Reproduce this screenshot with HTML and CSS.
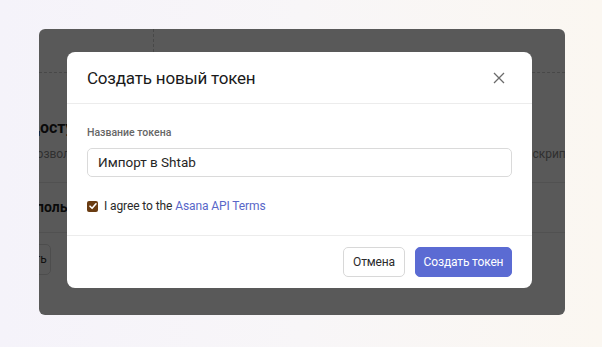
FILE: index.html
```html
<!DOCTYPE html>
<html lang="ru">
<head>
<meta charset="utf-8">
<link rel="stylesheet" href="styles.css">
</head>
<body>
<div class="panel">
  <div class="page">
    <div class="toprow">
      <div class="cell cell-a"></div>
      <div class="cell cell-b"></div>
    </div>
    <div class="section">
      <div class="sec-title">Доступ к API</div>
      <div class="sec-desc"><span>Позволяет сторонним приложениям</span><span>для скриптов</span></div>
    </div>
    <div class="section2">
      <div class="sec-title2">Использование</div>
    </div>
    <div class="btnrow"><span class="ghost-btn">Создать</span></div>
  </div>
  <div class="overlay"></div>
  <div class="modal">
    <div class="modal-head">
      <h2 class="modal-title">Создать новый токен</h2>
      <svg class="close" width="12" height="12" viewBox="0 0 12 12"><path d="M1 1L11 11M11 1L1 11" stroke="#6b6b6b" stroke-width="1.3" fill="none"/></svg>
    </div>
    <div class="modal-body">
      <label class="label">Название токена</label>
      <div class="input">Импорт в Shtab</div>
      <div class="agree">
        <span class="check"><svg width="10" height="10" viewBox="0 0 10 10"><path d="M2 5.2L4.1 7.3L8 2.8" stroke="#fff" stroke-width="1.6" fill="none" stroke-linecap="round" stroke-linejoin="round"/></svg></span>
        <span>I agree to the <a class="link">Asana API Terms</a></span>
      </div>
    </div>
    <div class="modal-foot">
      <button class="btn btn-cancel">Отмена</button>
      <button class="btn btn-primary">Создать токен</button>
    </div>
  </div>
</div>
</body>
</html>
```
FILE: styles.css
```css
* { box-sizing: border-box; }
html, body { margin: 0; height: 100%; }
body {
  background: linear-gradient(90deg, #f5f3fa 0%, #f8f6f8 50%, #fbf7f1 100%);
  font-family: Roboto, "Noto Sans", sans-serif;
  padding: 29px 37px 0 39px;
}
.panel {
  position: relative;
  width: 526px;
  height: 286px;
  border-radius: 6px;
  overflow: hidden;
  background: #fff;
}
.page {
  height: 100%;
  color: #1f1f1f;
}
.toprow {
  display: flex;
  height: 44px;
  border-bottom: 1px dashed #cfcfcf;
}
.cell-a { width: 115px; border-right: 1px dashed #cfcfcf; }
.section { padding: 44px 0 0 0; margin-left: -11px; height: 110px; border-bottom: 1px solid #e8e8e8; margin-right: -20px; }
.sec-title { font-size: 16px; font-weight: 700; line-height: 22px; white-space: nowrap; }
.sec-desc { display: flex; justify-content: space-between; font-size: 12px; color: #8a8a8a; margin-top: 8px; white-space: nowrap; }
.section2 { margin-left: -20px; height: 50px; border-bottom: 1px solid #e8e8e8; padding-top: 16px; margin-right: -20px; }
.sec-title2 { font-size: 14px; font-weight: 700; white-space: nowrap; }
.btnrow { padding-top: 11px; margin-left: -40px; }
.ghost-btn { display: inline-block; height: 31px; width: 52px; border: 1px solid #dcdcdc; border-radius: 5px; font-size: 12px; line-height: 29px; text-align: right; padding-right: 6px; color: #333; white-space: nowrap; overflow: hidden; }
.overlay {
  position: absolute;
  inset: 0;
  background: rgba(0, 0, 0, 0.65);
}
.modal {
  position: absolute;
  left: 28px;
  top: 23px;
  width: 465px;
  height: 236px;
  background: #fff;
  border-radius: 8px;
  display: flex;
  flex-direction: column;
}
.modal-head {
  height: 52px;
  display: flex;
  align-items: center;
  justify-content: space-between;
  padding: 0 27px 0 20px;
  border-bottom: 1px solid #ececec;
}
.modal-title { margin: 0; font-size: 17px; font-weight: 400; color: #1a1a1a; letter-spacing: -0.2px; }
.close { display: block; }
.modal-body {
  flex: 1;
  padding: 21px 20px 0 20px;
  border-bottom: 1px solid #ececec;
}
.label { display: block; font-size: 10.5px; color: #666; line-height: 16px; font-weight: 500; }
.input {
  margin-top: 7px;
  height: 29px;
  border: 1px solid #dadada;
  border-radius: 5px;
  font-size: 13.5px;
  line-height: 27px;
  padding-left: 10px;
  color: #262626;
}
.agree { display: flex; align-items: center; gap: 6px; margin-top: 22px; font-size: 12px; letter-spacing: -0.1px; color: #2a2a2a; }
.check {
  width: 11px; height: 11px;
  border-radius: 2px;
  background: #6a3c12;
  display: flex; align-items: center; justify-content: center;
}
.link { color: #5866c8; }
.modal-foot {
  height: 52px;
  display: flex;
  align-items: center;
  justify-content: flex-end;
  gap: 10px;
  padding: 0 20px 0 0;
}
.btn {
  height: 30px;
  border-radius: 5px;
  font-family: inherit;
  font-size: 12px;
  letter-spacing: -0.15px;
  padding: 0;
  white-space: nowrap;
}
.btn-cancel { background: #fff; border: 1px solid #d8d8d8; color: #2a2a2a; width: 62px; }
.btn-primary { background: #5b6bd3; border: 1px solid #5b6bd3; color: #fff; width: 97px; }
```
